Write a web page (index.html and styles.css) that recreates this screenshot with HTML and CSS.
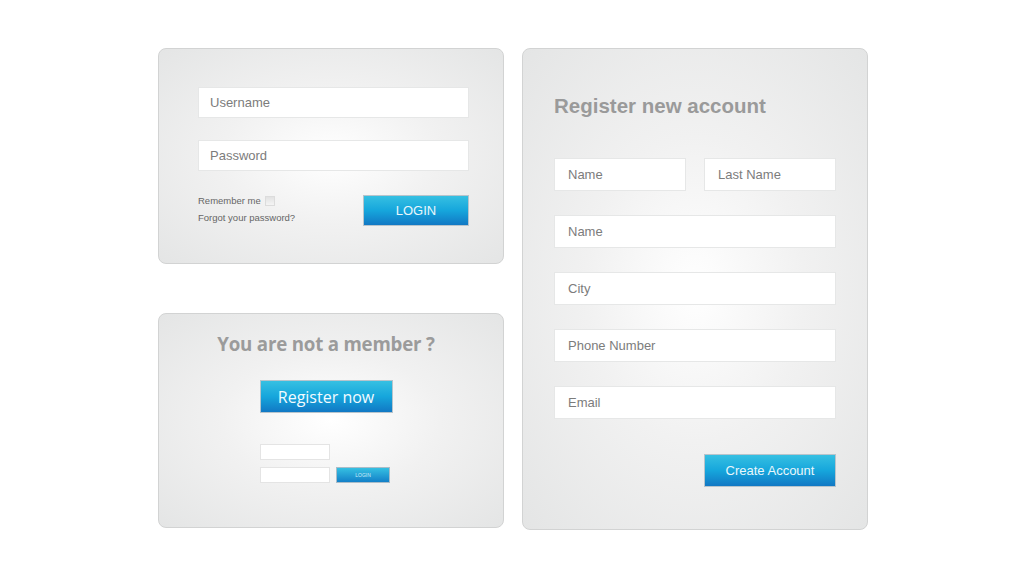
FILE: index.html
```html
<!DOCTYPE html>
<html lang="en">
<head>
  <meta charset="UTF-8">
  <meta name="viewport" content="width=device-width, initial-scale=1.0">
  <title>Login &amp; Register Forms</title>
  <link rel="stylesheet" href="styles.css">
</head>
<body>
  <div class="page">
    <div class="column">
      <form class="card login-card">
        <input class="field" type="text" placeholder="Username">
        <input class="field" type="password" placeholder="Password">
        <div class="login-footer">
          <div class="login-links">
            <label class="remember">Remember me <span class="check"></span></label>
            <a class="forgot">Forgot your password?</a>
          </div>
          <button type="button" class="btn btn-login">LOGIN</button>
        </div>
      </form>

      <div class="card member-card">
        <h2>You are not a member ?</h2>
        <button type="button" class="btn btn-register">Register now</button>
        <div class="mini-form">
          <div class="mini-row"><span class="mini-field"></span></div>
          <div class="mini-row">
            <span class="mini-field"></span>
            <span class="mini-btn">LOGIN</span>
          </div>
        </div>
      </div>
    </div>

    <form class="card register-card">
      <h1>Register new account</h1>
      <div class="row-split">
        <input class="field" type="text" placeholder="Name">
        <input class="field" type="text" placeholder="Last Name">
      </div>
      <input class="field" type="text" placeholder="Name">
      <input class="field" type="text" placeholder="City">
      <input class="field" type="text" placeholder="Phone Number">
      <input class="field" type="text" placeholder="Email">
      <div class="actions">
        <button type="button" class="btn btn-create">Create Account</button>
      </div>
    </form>
  </div>
</body>
</html>
```

FILE: styles.css
```css
* {
  margin: 0;
  padding: 0;
  box-sizing: border-box;
}

body {
  background: #ffffff;
  font-family: "Liberation Sans", Arial, sans-serif;
  color: #777;
}

.page {
  display: flex;
  justify-content: center;
  gap: 18px;
  padding-top: 48px;
  padding-left: 2px;
}

.column {
  display: flex;
  flex-direction: column;
  gap: 49px;
}

.card {
  width: 346px;
  border: 1px solid #d2d3d3;
  border-radius: 8px;
  background: radial-gradient(ellipse at center, #ffffff 0%, #f1f1f1 45%, #e4e5e5 100%);
}

/* login */

.login-card {
  height: 216px;
  padding: 38px 34px 0 39px;
  display: flex;
  flex-direction: column;
  gap: 22px;
}

.field {
  display: block;
  width: 100%;
  height: 31px;
  border: 1px solid #e6e7e7;
  background: #fff;
  padding: 0 11px;
  font-family: "Liberation Sans", Arial, sans-serif;
  font-size: 13px;
  color: #777;
  outline: none;
}

.field::placeholder {
  color: #7c7c7c;
}

.login-footer {
  display: flex;
  justify-content: space-between;
  align-items: flex-start;
  margin-top: 2px;
}

.login-links {
  display: flex;
  flex-direction: column;
  gap: 6px;
  font-size: 9.5px;
  color: #666;
}

.remember {
  display: flex;
  align-items: center;
  gap: 4px;
}

.check {
  width: 10px;
  height: 10px;
  border: 1px solid #dcdcdc;
  background: linear-gradient(#e2e2e2, #f4f4f4);
}

.forgot {
  cursor: pointer;
}

.btn {
  border: 1px solid #b7c4cc;
  background: linear-gradient(#36c0e2 0%, #16a6dc 50%, #1178c4 100%);
  color: #eaf6fb;
  font-family: "Liberation Sans", Arial, sans-serif;
  cursor: pointer;
}

.btn-login {
  width: 106px;
  height: 31px;
  font-size: 13px;
}

/* not a member */

.member-card {
  height: 215px;
  display: flex;
  flex-direction: column;
  align-items: center;
  padding: 17px 10px 0 0;
}

.member-card h2 {
  font-family: "Open Sans", sans-serif;
  font-size: 18.7px;
  font-weight: 700;
  color: #9b9b9b;
  letter-spacing: -0.2px;
}

.btn-register {
  margin-top: 24px;
  width: 133px;
  height: 33px;
  font-family: "Open Sans", sans-serif;
  font-size: 16px;
  color: #f2fbff;
}

.mini-form {
  margin-top: 31px;
  margin-right: 2px;
  width: 130px;
  display: flex;
  flex-direction: column;
  gap: 7px;
}

.mini-row {
  display: flex;
  gap: 6px;
}

.mini-field {
  width: 70px;
  height: 16px;
  background: #fff;
  border: 1px solid #e4e4e4;
}

.mini-btn {
  width: 54px;
  height: 16px;
  border: 1px solid #a9bcc8;
  background: linear-gradient(#36c0e2, #1380c8);
  color: #cfeefa;
  font-size: 5px;
  display: flex;
  align-items: center;
  justify-content: center;
}

/* register */

.register-card {
  height: 482px;
  padding: 45px 31px 0 31px;
  display: flex;
  flex-direction: column;
  gap: 24px;
}

.register-card h1 {
  font-size: 20.5px;
  font-weight: 700;
  color: #9a9a9a;
  margin-bottom: 16px;
}

.register-card .field {
  height: 33px;
  padding: 0 13px;
  font-size: 13px;
}

.row-split {
  display: flex;
  justify-content: space-between;
}

.row-split .field {
  width: 132px;
}

.actions {
  display: flex;
  justify-content: flex-end;
  margin-top: 11px;
}

.btn-create {
  width: 132px;
  height: 33px;
  font-size: 13px;
}
```
